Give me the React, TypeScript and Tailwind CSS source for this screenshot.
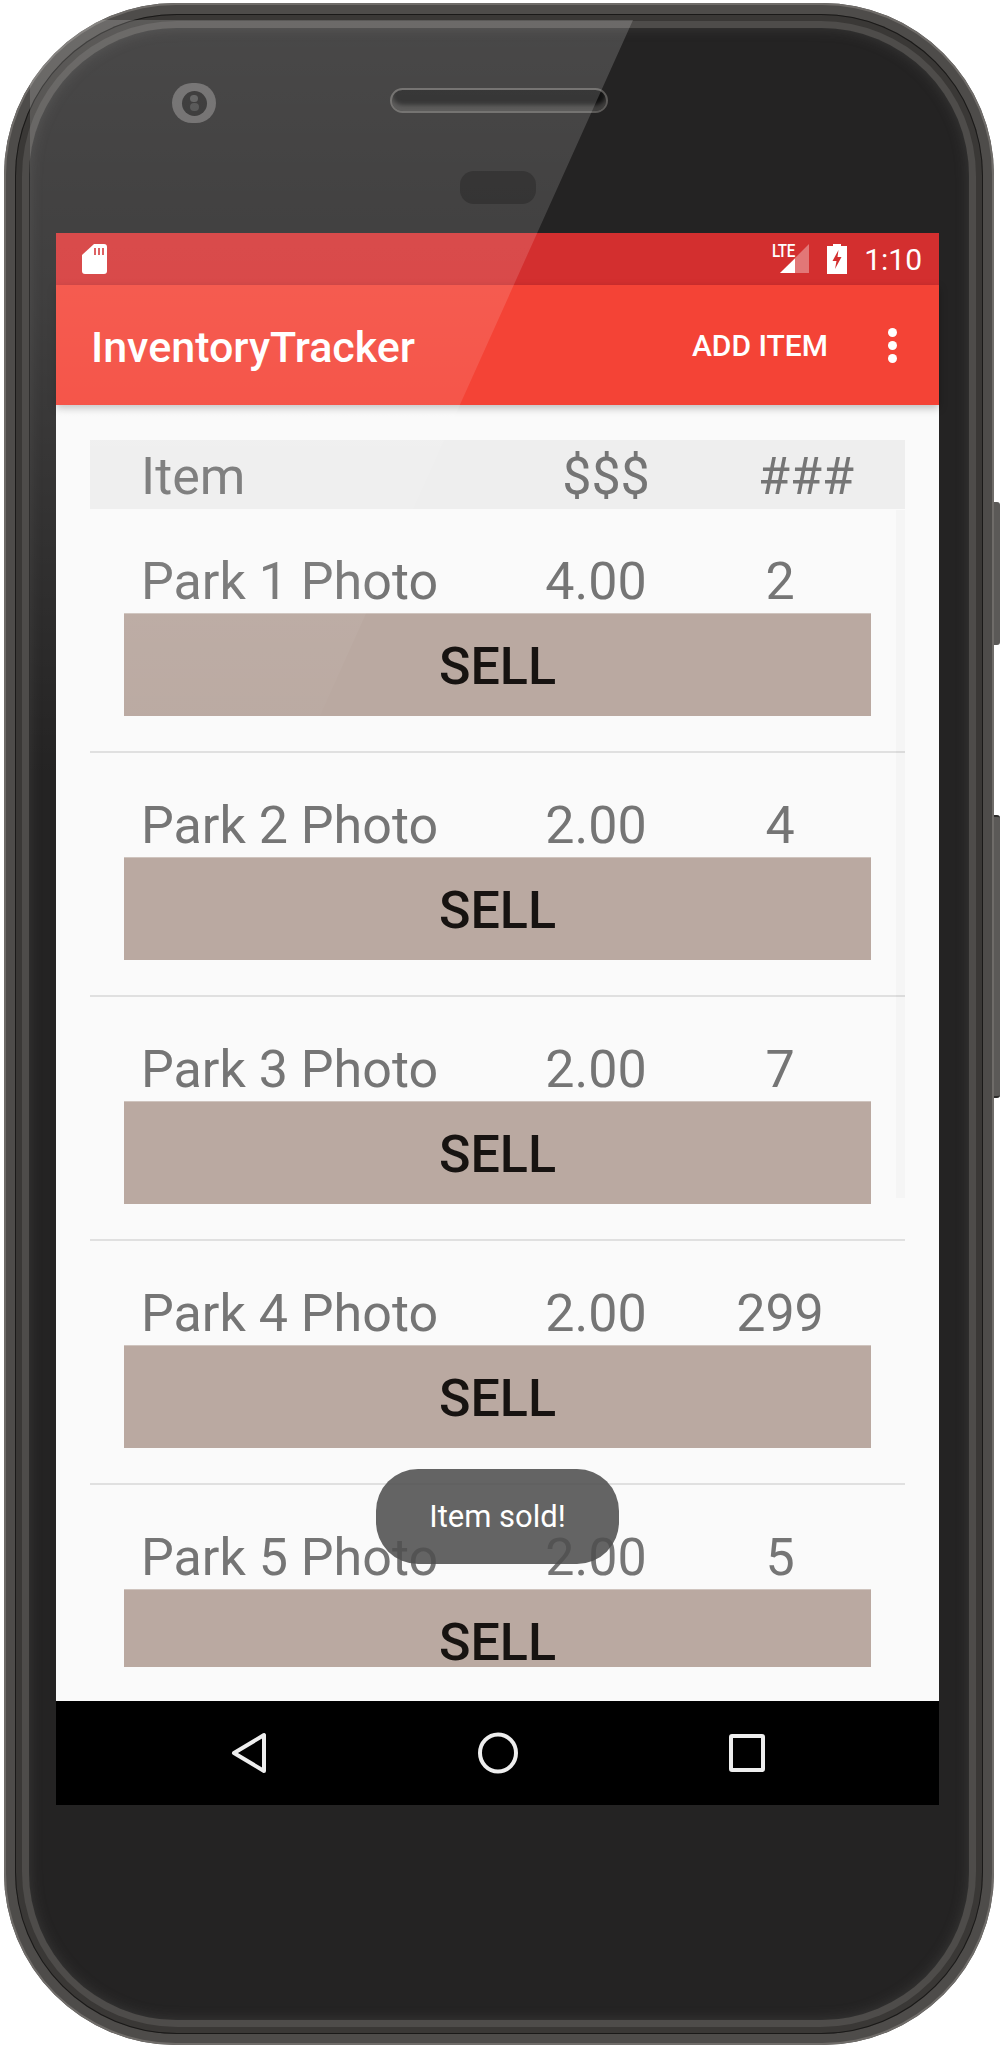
import React from "react";

const rows = [
  { name: "Park 1 Photo", price: "4.00", qty: "2" },
  { name: "Park 2 Photo", price: "2.00", qty: "4" },
  { name: "Park 3 Photo", price: "2.00", qty: "7" },
  { name: "Park 4 Photo", price: "2.00", qty: "299" },
  { name: "Park 5 Photo", price: "2.00", qty: "5" },
];

function StatusIcons() {
  return (
    <div className="flex items-center">
      <div className="relative w-[38px] h-[30px]">
        <span className="absolute left-[-11px] top-[-3px] text-[19px] leading-[20px] font-medium text-white tracking-[-0.5px] [font-family:Roboto,sans-serif] scale-x-[0.8]">
          LTE
        </span>
        <svg width="30" height="30" viewBox="0 0 30 30" className="absolute left-0 top-0">
          <path d="M29 0V29H0Z" fill="#fff" fillOpacity="0.35" />
          <path d="M15 14.5V29H0Z" fill="#fff" />
        </svg>
      </div>
      <svg width="20" height="30" viewBox="0 0 20 30" className="ml-[9px]">
        <path d="M6 0h8v2h6v28H0V2h6z" fill="#fff" />
        <path d="M11.5 6 5.5 17h4l-1.5 8 6.5-12h-4z" fill="#d32f2f" />
      </svg>
      <span className="ml-[17px] pt-[2px] text-[30px] leading-[30px] text-white [font-family:Roboto,sans-serif]">1:10</span>
    </div>
  );
}

function Row({ name, price, qty, last }: { name: string; price: string; qty: string; last?: boolean }) {
  return (
    <div className={last ? "h-[158px]" : "h-[244px] border-b-2 border-[#e0e0e0]"}>
      <div className="flex h-[101px] items-end text-[#757575] text-[52px] leading-[56px] [font-family:Roboto,sans-serif]">
        <span className="ml-[51px] w-[355px]">{name}</span>
        <span className="w-[200px] text-center">{price}</span>
        <span className="ml-[24px] w-[120px] text-center">{qty}</span>
      </div>
      <div className="mx-[34px] mt-[3px] h-[103px] bg-[#baa9a1] border-t border-[#cfc4be] flex items-center justify-center">
        <span className="pt-[3px] text-[52px] leading-[56px] font-medium text-[#171311] [font-family:Roboto,sans-serif]">SELL</span>
      </div>
    </div>
  );
}

export default function App() {
  return (
    <div className="relative w-[1003px] h-[2048px] bg-white overflow-hidden">
      {/* side buttons */}
      <div className="absolute left-[990px] top-[502px] w-[10px] h-[143px] rounded-r-[3px] bg-[#5b5957]" />
      <div className="absolute left-[990px] top-[815px] w-[10px] h-[283px] rounded-r-[3px] bg-[#5b5957] border-y-2 border-[#2c2b2a]" />

      {/* phone body */}
      <div className="relative ml-[4px] mt-[3px] w-[990px] h-[2042px] rounded-[172px] bg-[#4e4c4a] shadow-[inset_0_0_0_2px_#6f6c69] p-[11px]">
        <div className="h-full rounded-[162px] bg-[#3a3836] p-[7px] shadow-[inset_0_0_0_1px_#1a1918]">
          <div className="h-full rounded-[155px] bg-[#4e4c4a] p-[7px]">
            <div className="relative h-full rounded-[148px] bg-[#242323] shadow-[inset_0_0_14px_rgba(110,108,106,0.3)] overflow-hidden">
              {/* top bezel */}
              <div className="h-[205px] relative">
                <div className="absolute left-[143px] top-[55px] w-[44px] h-[40px] rounded-full bg-[#5e5c5c] flex items-center justify-center">
                  <div className="w-[25px] h-[25px] rounded-full bg-[#1c1b1b] flex flex-col items-center justify-center gap-[1px]">
                    <div className="w-[8px] h-[7px] rounded-full bg-[#4a4a4a]" />
                    <div className="w-[9px] h-[8px] rounded-full bg-[#3c3c3c]" />
                  </div>
                </div>
                <div className="absolute left-[361px] top-[60px] w-[218px] h-[25px] rounded-full bg-[#121212] border-2 border-[#5c5a58] shadow-[inset_0_-6px_4px_#403f3e]" />
                <div className="absolute left-[431px] top-[143px] w-[76px] h-[33px] rounded-[14px] bg-[#141313]" />
              </div>

              {/* screen */}
              <div className="ml-[27px] mr-[30px] h-[1572px] flex flex-col bg-[#fafafa]">
                <div className="h-[52px] shrink-0 bg-[#d32f2f] pl-[26px] pr-[17px] flex items-center justify-between">
                  <svg width="25" height="30" viewBox="0 0 25 30">
                    <path d="M12 0h10a3 3 0 0 1 3 3v24a3 3 0 0 1-3 3H3a3 3 0 0 1-3-3V11z" fill="#fff" />
                    <path d="M12 4h2v7h-2zM16 4h2v7h-2zM20 4h2v7h-2z" fill="#d84a4b" />
                  </svg>
                  <StatusIcons />
                </div>
                <div className="relative z-10 h-[120px] shrink-0 bg-[#f44336] pl-[35px] pr-[42px] flex items-center justify-between shadow-[0_3px_8px_rgba(0,0,0,0.25)]">
                  <span className="text-[43px] leading-[48px] font-medium text-white pt-[3px] [font-family:Roboto,sans-serif]">InventoryTracker</span>
                  <div className="flex items-center">
                    <span className="pt-[1px] text-[30px] leading-[32px] font-medium text-white [font-family:Roboto,sans-serif]">ADD ITEM</span>
                    <div className="ml-[60px] flex flex-col gap-[4px]">
                      <div className="w-[9px] h-[9px] rounded-full bg-white" />
                      <div className="w-[9px] h-[9px] rounded-full bg-white" />
                      <div className="w-[9px] h-[9px] rounded-full bg-white" />
                    </div>
                  </div>
                </div>

                {/* list */}
                <div className="relative mx-[34px] mt-[35px] h-[1227px] overflow-hidden">
                  <div className="h-[69px] bg-[#eeeeee] flex items-center pt-[5px] text-[#757575] text-[52px] leading-[56px] [font-family:Roboto,sans-serif]">
                    <span className="ml-[51px] w-[365px]">Item</span>
                    <span className="w-[200px] text-center">$$$</span>
                    <span className="ml-[40px] w-[120px] text-center">###</span>
                  </div>
                  {rows.map((r, i) => (
                    <Row key={r.name} {...r} last={i === rows.length - 1} />
                  ))}
                  <div className="absolute right-0 top-[70px] w-[9px] h-[688px] bg-black/[0.02]" />
                </div>

                {/* nav bar */}
                <div className="mt-[34px] h-[104px] shrink-0 bg-black flex items-center justify-center gap-[211px]">
                  <svg width="36" height="42" viewBox="0 0 36 42" fill="none" stroke="#eeeeee" strokeWidth="4" strokeLinejoin="round">
                    <path d="M33 3v36L3 21z" />
                  </svg>
                  <svg width="40" height="42" viewBox="0 0 40 42" fill="none" stroke="#eeeeee" strokeWidth="4">
                    <ellipse cx="20" cy="21" rx="18" ry="18.5" />
                  </svg>
                  <svg width="36" height="38" viewBox="0 0 36 38" fill="none" stroke="#eeeeee" strokeWidth="4" strokeLinejoin="round">
                    <rect x="2" y="2" width="32" height="34" rx="1" />
                  </svg>
                </div>
              </div>
            </div>
          </div>
        </div>
      </div>

      {/* toast */}
      <div className="absolute z-20 left-[376px] top-[1469px] w-[243px] h-[95px] rounded-[42px] bg-[#4f4f4f]/[0.88] flex items-center justify-center">
        <span className="text-[31px] leading-[36px] text-white [font-family:Roboto,sans-serif]">Item sold!</span>
      </div>

      {/* glass reflection */}
      <div className="absolute inset-0 z-30 pointer-events-none rounded-[172px] overflow-hidden">
        <div className="h-full bg-gradient-to-b from-white/[0.17] from-[1%] via-white/[0.125] via-[15%] to-white/0 to-[38%] [clip-path:polygon(30px_20px,633px_20px,0px_1427px,30px_1427px)]" />
      </div>
    </div>
  );
}
